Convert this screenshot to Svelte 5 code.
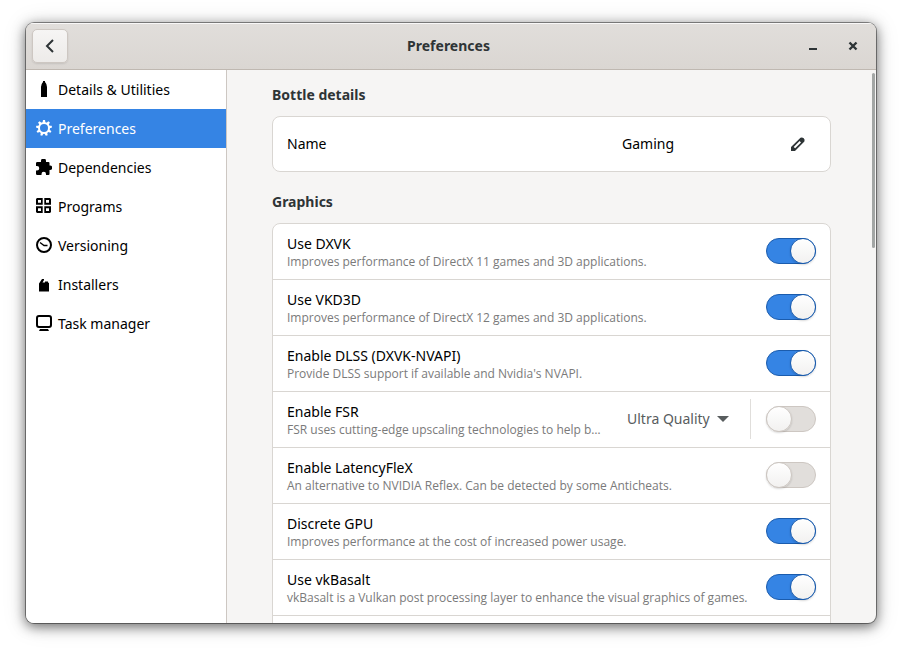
<script>
  const pages = [
    { id: 'details', label: 'Details & Utilities' },
    { id: 'preferences', label: 'Preferences' },
    { id: 'dependencies', label: 'Dependencies' },
    { id: 'programs', label: 'Programs' },
    { id: 'versioning', label: 'Versioning' },
    { id: 'installers', label: 'Installers' },
    { id: 'tasks', label: 'Task manager' }
  ];

  let current = $state('preferences');
  let name = $state('Gaming');
  let locked = $state(true);
  let quality = $state('Ultra Quality');

  let options = $state([
    { id: 'dxvk', title: 'Use DXVK', hint: 'Improves performance of DirectX 11 games and 3D applications.', on: true },
    { id: 'vkd3d', title: 'Use VKD3D', hint: 'Improves performance of DirectX 12 games and 3D applications.', on: true },
    { id: 'dlss', title: 'Enable DLSS (DXVK-NVAPI)', hint: "Provide DLSS support if available and Nvidia's NVAPI.", on: true },
    { id: 'fsr', title: 'Enable FSR', hint: 'FSR uses cutting-edge upscaling technologies to help b…', on: false },
    { id: 'latency', title: 'Enable LatencyFleX', hint: 'An alternative to NVIDIA Reflex. Can be detected by some Anticheats.', on: false },
    { id: 'gpu', title: 'Discrete GPU', hint: 'Improves performance at the cost of increased power usage.', on: true },
    { id: 'vkbasalt', title: 'Use vkBasalt', hint: 'vkBasalt is a Vulkan post processing layer to enhance the visual graphics of games.', on: true }
  ]);

  const teeth = [0, 40, 80, 120, 160, 200, 240, 280, 320];
</script>

<div class="desktop">
  <div class="window">
    <header>
      <div class="side">
        <button class="back" aria-label="Back">
          <svg width="16" height="16" viewBox="0 0 16 16"><path d="M11 2 5 8l6 6" fill="none" stroke="currentColor" stroke-width="2" /></svg>
        </button>
      </div>
      <h1>Preferences</h1>
      <div class="side end">
        <button class="control" aria-label="Minimize">
          <svg width="16" height="16" viewBox="0 0 16 16"><path d="M4 10h8v2H4z" fill="currentColor" /></svg>
        </button>
        <button class="control" aria-label="Close">
          <svg width="16" height="16" viewBox="0 0 16 16"><path d="m4.500 4.500 7 7m0-7-7 7" fill="none" stroke="currentColor" stroke-width="2.400" /></svg>
        </button>
      </div>
    </header>

    <div class="body">
      <nav>
        {#each pages as page (page.id)}
          <a href={'#' + page.id} class:active={current === page.id} onclick={() => (current = page.id)}>
            <svg width="16" height="16" viewBox="0 0 16 16" fill="currentColor">
              {#if page.id === 'details'}
                <path d="M7 0h2v1q2 2 2 5v10H5V6q0-3 2-5z" />
              {:else if page.id === 'preferences'}
                <circle cx="8" cy="8" r="5" fill="none" stroke="currentColor" stroke-width="2" />
                {#each teeth as angle}
                  <path d="M7 0h2l.5 3h-3z" transform="rotate({angle} 8 8)" />
                {/each}
              {:else if page.id === 'dependencies'}
                <path d="M1.500 3H5V2a2 2 0 0 1 5 0v1h2.500q1 0 1 1v2.500h.5a2 2 0 0 1 0 4.500h-.5v4q0 1-1 1H10v-1a2 2 0 0 0-4.500 0v1h-4q-1.500 0-1.500-1v-3.500h1a2 2 0 0 0 0-4.500H0V4q0-1 1.500-1z" />
              {:else if page.id === 'programs'}
                <path fill-rule="evenodd" d="M1 0h5.700v6.700H0V1zM2 2v2.700h3V2zM8.300 0H14l1 1v5.700H8.300zM10 2v2.700h3V2zM0 8.300h6.700V15H1l-1-1zM2 10.300V13h3v-2.700zM8.300 8.300H15V14l-1 1H8.300zM10 10.300V13h3v-2.700z" />
              {:else if page.id === 'versioning'}
                <circle cx="8" cy="8" r="7" fill="none" stroke="currentColor" stroke-width="2" />
                <path d="M4 5.500 8 8.500h3.500" fill="none" stroke="currentColor" stroke-width="1.300" />
              {:else if page.id === 'installers'}
                <path d="M3 7.500l3-4.500h2v1L6.500 6.500H9V5.500h3v1l1 .5V15.500H3z" />
              {:else}
                <rect x="1" y="1" width="14" height="11" rx="2" fill="none" stroke="currentColor" stroke-width="2" />
                <path d="M4 14h8l1 2H3z" />
              {/if}
            </svg>
            <span>{page.label}</span>
          </a>
        {/each}
      </nav>

      <main>
        <section>
          <h2>Bottle details</h2>
          <div class="card">
            <div class="row">
              <label class="text" for="name">Name</label>
              <input id="name" class="entry" type="text" bind:value={name} readonly={locked} />
              <button class="edit" aria-label="Rename" onclick={() => (locked = !locked)}>
                <svg width="16" height="16" viewBox="0 0 16 16"><path fill="currentColor" fill-rule="evenodd" d="M1 15v-4l9.500-9.300a3 3 0 0 1 3.900 3.900L5 15zM3.700 10.900l1.400 1.400 5.900-5.900L9.600 5z" /></svg>
              </button>
            </div>
          </div>
        </section>

        <section>
          <h2>Graphics</h2>
          <div class="card">
            {#each options as option (option.id)}
              <div class="row">
                <label class="text" for={option.id}>
                  <span class="title">{option.title}</span>
                  <span class="hint">{option.hint}</span>
                </label>
                {#if option.id === 'fsr'}
                  <div class="picker">
                    <select aria-label="FSR quality" bind:value={quality}>
                      <option>Ultra Quality</option>
                    </select>
                    <svg width="12" height="6" viewBox="0 0 12 6"><path d="M0 0h12L6 6z" fill="currentColor" /></svg>
                  </div>
                {/if}
                <input id={option.id} class="switch" type="checkbox" role="switch" bind:checked={option.on} />
              </div>
            {/each}
            <div class="row"></div>
          </div>
        </section>
        <div class="thumb"></div>
      </main>
    </div>
  </div>
</div>

<style>
  :global(body) {
    margin: 0;
    background: #fff;
  }

  .desktop {
    box-sizing: border-box;
    height: 100vh;
    padding: 23px 26px 29px;
    font: 14px/20px 'Noto Sans', sans-serif;
    color: #000;
  }

  .window {
    display: flex;
    flex-direction: column;
    height: 100%;
    overflow: hidden;
    border-radius: 8px;
    background: #f6f5f4;
    box-shadow: 0 0 0 1px rgba(0, 0, 0, 0.4), 0 3px 12px 1px rgba(0, 0, 0, 0.5), 0 2px 24px rgba(0, 0, 0, 0.15);
  }

  button {
    display: flex;
    align-items: center;
    justify-content: center;
    padding: 0;
    border: 0;
    background: none;
    color: #2e3436;
  }

  header {
    display: flex;
    align-items: center;
    flex: none;
    height: 46px;
    padding: 0 6px;
    border-bottom: 1px solid #bfb8b1;
    background: linear-gradient(to top, #dad6d2, #e1dedb);
    box-shadow: inset 0 1px #f9f8f8;
    color: #2e3436;
  }

  h1,
  h2 {
    margin: 0;
    font-size: 14px;
    line-height: 20px;
    font-weight: 700;
  }

  .side {
    display: flex;
    box-sizing: border-box;
    flex: 1;
    gap: 16px;
  }

  .end {
    justify-content: flex-end;
    padding-right: 5px;
  }

  .back {
    box-sizing: border-box;
    width: 36px;
    height: 34px;
    border: 1px solid #cdc7c2;
    border-radius: 5px;
    background: linear-gradient(to top, #edebe9, #f6f5f4);
    box-shadow: 0 1px 2px rgba(0, 0, 0, 0.1);
  }

  .control {
    width: 24px;
    height: 24px;
  }

  .body {
    display: flex;
    flex: 1;
    min-height: 0;
  }

  nav {
    flex: none;
    width: 200px;
    border-right: 1px solid #cdc7c2;
    background: #fff;
  }

  nav a {
    display: flex;
    align-items: center;
    gap: 6px;
    height: 39px;
    padding: 0 10px;
    color: #000;
    text-decoration: none;
  }

  nav svg {
    margin-bottom: 1px;
  }

  nav .active {
    background: #3584e4;
    color: #fff;
  }

  main {
    position: relative;
    display: flex;
    flex-direction: column;
    gap: 20px;
    flex: 1;
    min-width: 0;
    padding: 15px 45px 0;
    overflow: hidden;
  }

  h2 {
    margin-bottom: 11px;
    color: #2e3436;
  }

  .card {
    border: 1px solid #d9d6d2;
    border-radius: 8px;
    background: #fff;
  }

  .row {
    display: flex;
    align-items: center;
    box-sizing: border-box;
    height: 56px;
    padding: 0 14px 1px;
    border-bottom: 1px solid #d9d6d2;
  }

  .row:last-child {
    height: 54px;
    padding-bottom: 0;
    border-bottom: 0;
  }

  .text {
    flex: 1;
    min-width: 0;
    white-space: nowrap;
  }

  .text span {
    display: block;
  }

  .title {
    padding-top: 2px;
  }

  .hint {
    color: #7a7a7a;
    font-family: 'Open Sans', 'Noto Sans', sans-serif;
    font-size: 12px;
    line-height: 16px;
  }

  .entry {
    width: 158px;
    padding: 0;
    border: 0;
    outline: 0;
    background: none;
    color: inherit;
    font: inherit;
  }

  .edit {
    width: 36px;
    height: 34px;
  }

  .picker {
    display: flex;
    align-items: center;
    height: 40px;
    margin-right: 15px;
    padding-right: 21px;
    gap: 7px;
    border-right: 1px solid #e0dedb;
    color: #585d5e;
  }

  select {
    appearance: none;
    padding: 0;
    border: 0;
    outline: 0;
    background: none;
    color: inherit;
    font: inherit;
  }

  .switch {
    appearance: none;
    box-sizing: border-box;
    flex: none;
    width: 50px;
    height: 26px;
    margin: 0;
    border: 1px solid #cdc7c2;
    border-radius: 13px;
    background: #e1dedb;
  }

  .switch::before {
    content: '';
    display: block;
    box-sizing: border-box;
    width: 26px;
    height: 26px;
    margin: -1px;
    border: 1px solid #cdc7c2;
    border-radius: 50%;
    background: linear-gradient(to top, #f2f1f0, #fff);
    box-shadow: 0 1px 2px rgba(0, 0, 0, 0.15);
  }

  .switch:checked {
    border-color: #1b5cad;
    background: #3584e4;
  }

  .switch:checked::before {
    margin-left: 23px;
    border-color: #1b5cad;
  }

  .thumb {
    position: absolute;
    top: 3px;
    right: 1px;
    width: 3px;
    height: 175px;
    border-radius: 2px;
    background: #a3a6a5;
  }
</style>
